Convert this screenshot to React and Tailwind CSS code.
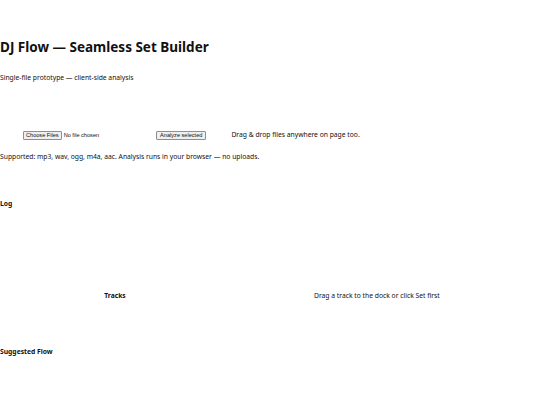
export default function App() {
  return (
    <div className="w-[540px] h-[405px] bg-white text-[#111] font-['Noto_Sans',sans-serif] overflow-hidden">
      {/* Header */}
      <header className="pt-[38px]">
        <h1 className="text-[13.5px] font-bold leading-[18px]">DJ Flow — Seamless Set Builder</h1>
        <p className="mt-[17px] text-[6.75px] leading-[10px]">Single-file prototype — client-side analysis</p>
      </header>

      {/* Controls */}
      <section className="mt-[46px]">
        <div className="flex items-center h-[12px] pl-[23px]">
          <div className="flex items-center gap-[2px] font-['Liberation_Sans',sans-serif] text-[5.6px]">
            <span className="border border-[#8f8f8f] bg-[#efefef] rounded-[1px] px-[2px] leading-[7px]">Choose Files</span>
            <span>No file chosen</span>
          </div>
          <button className="ml-[57px] border border-[#8f8f8f] bg-[#efefef] rounded-[1px] px-[3px] font-['Liberation_Sans',sans-serif] text-[5.6px] leading-[7px]">
            Analyze selected
          </button>
          <span className="ml-[25px] text-[6.75px]">Drag &amp; drop files anywhere on page too.</span>
        </div>
        <p className="mt-[11px] text-[6.75px] leading-[10px]">Supported: mp3, wav, ogg, m4a, aac. Analysis runs in your browser — no uploads.</p>
      </section>

      {/* Log */}
      <section className="mt-[37px]">
        <h3 className="text-[6.75px] font-bold leading-[10px]">Log</h3>
      </section>

      {/* Tracks */}
      <section className="mt-[82px] grid grid-cols-[230px_1fr] text-[6.75px] leading-[10px]">
        <h3 className="font-bold text-center">Tracks</h3>
        <div className="pl-[84px]">Drag a track to the dock or click Set first</div>
      </section>

      {/* Suggested flow */}
      <section className="mt-[46px]">
        <h3 className="text-[6.75px] font-bold leading-[10px]">Suggested Flow</h3>
      </section>
    </div>
  );
}
